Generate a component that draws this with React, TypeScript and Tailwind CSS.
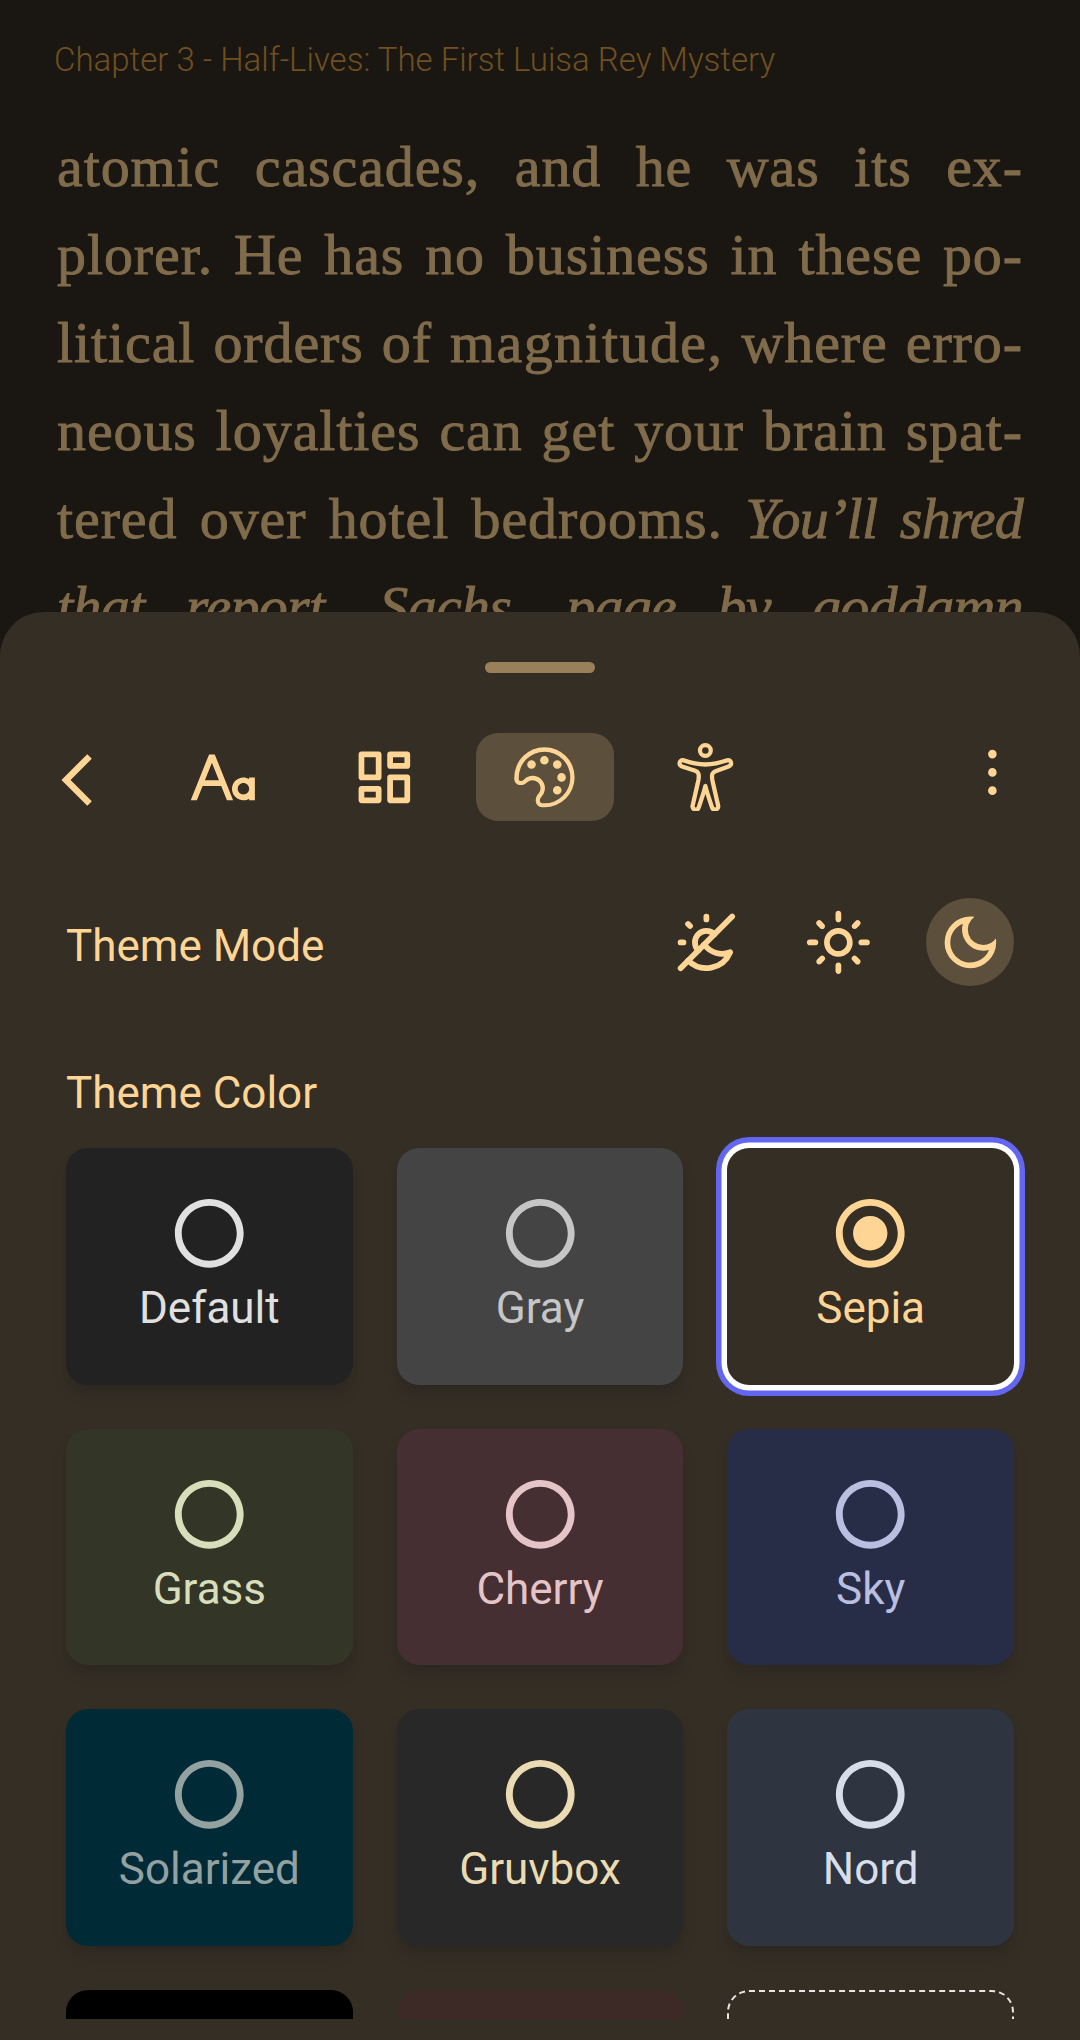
import { MdArrowBackIosNew, MdOutlineDarkMode, MdOutlineLightMode, MdRadioButtonChecked, MdRadioButtonUnchecked } from 'react-icons/md';
import { RiDashboardLine, RiFontSize } from 'react-icons/ri';
import { VscSymbolColor } from 'react-icons/vsc';
import { IoAccessibilityOutline } from 'react-icons/io5';
import { PiDotsThreeVerticalBold } from 'react-icons/pi';
import { TbSunMoon } from 'react-icons/tb';

type Line = { words: string[]; italicFrom: number };

const lines: Line[] = [
  { words: ['atomic', 'cascades,', 'and', 'he', 'was', 'its', 'ex-'], italicFrom: 99 },
  { words: ['plorer.', 'He', 'has', 'no', 'business', 'in', 'these', 'po-'], italicFrom: 99 },
  { words: ['litical', 'orders', 'of', 'magnitude,', 'where', 'erro-'], italicFrom: 99 },
  { words: ['neous', 'loyalties', 'can', 'get', 'your', 'brain', 'spat-'], italicFrom: 99 },
  { words: ['tered', 'over', 'hotel', 'bedrooms.', 'You’ll', 'shred'], italicFrom: 4 },
  { words: ['that', 'report,', 'Sachs,', 'page', 'by', 'goddamn'], italicFrom: 0 },
];

const themes = [
  { name: 'Default', style: 'bg-[#222222] text-[#e0e0e0]' },
  { name: 'Gray', style: 'bg-[#444444] text-[#c6c6c6]' },
  { name: 'Sepia', style: 'bg-[#342e25] text-[#ffd595]', selected: true },
  { name: 'Grass', style: 'bg-[#333627] text-[#d8deba]' },
  { name: 'Cherry', style: 'bg-[#462f32] text-[#e5c4c8]' },
  { name: 'Sky', style: 'bg-[#282d47] text-[#babee1]' },
  { name: 'Solarized', style: 'bg-[#002b36] text-[#93a1a1]' },
  { name: 'Gruvbox', style: 'bg-[#282828] text-[#ebdbb2]' },
  { name: 'Nord', style: 'bg-[#2e3440] text-[#d8dee9]' },
];

const cardShadow = 'shadow-[0_11px_16.5px_-2.75px_rgb(0_0_0/0.1),0_5.5px_11px_-5.5px_rgb(0_0_0/0.1)]';
const selectedRing = 'shadow-[0_0_0_5.5px_#ffffff,0_0_0_11px_#6366f1]';

function BookPage() {
  return (
    <div className="h-[612px] overflow-hidden pt-[39px]">
      <h1 className="ml-[54px] h-[42px] text-[33px] leading-[42px] font-light whitespace-nowrap text-[#704f20]">
        Chapter 3 - Half-Lives: The First Luisa Rey Mystery
      </h1>
      <div className="mt-[42px] mr-[57px] ml-[57px] font-['Liberation_Serif',serif] text-[58px] text-[#806b4b] [-webkit-text-stroke:0.9px_#806b4b]">
        {lines.map((line) => (
          <p key={line.words[0]} className="flex h-[88px] justify-between leading-[88px] whitespace-nowrap">
            {line.words.map((word, i) => (
              <span
                key={word}
                className={i >= line.italicFrom ? 'tracking-[-0.7px] italic' : word === 'magnitude,' ? 'tracking-[1.4px]' : 'tracking-[0.9px]'}
              >
                {word}
              </span>
            ))}
          </p>
        ))}
      </div>
    </div>
  );
}

function Tabs() {
  const tab = 'flex h-[88px] w-[138px] items-center justify-center rounded-[22px]';
  return (
    <div className="flex h-[88px] items-center pl-[46px]">
      <button className="mt-[6px] w-[108px]" aria-label="Back">
        <MdArrowBackIosNew size={61.875} />
      </button>
      <div className="flex gap-[22.9px]">
        <button className={tab} aria-label="Font"><RiFontSize size={68.75} /></button>
        <button className={tab} aria-label="Layout"><RiDashboardLine size={68.75} /></button>
        <button className={`${tab} bg-[#5c4f3b]`} aria-label="Color"><VscSymbolColor size={68.75} /></button>
        <button className={tab} aria-label="Behavior"><IoAccessibilityOutline size={68.75} /></button>
      </div>
      <button className="mr-[53px] mb-[9px] ml-auto" aria-label="More">
        <PiDotsThreeVerticalBold size={68.75} />
      </button>
    </div>
  );
}

function ThemeMode() {
  const mode = 'flex size-[88px] items-center justify-center rounded-full';
  return (
    <div className="mt-[77px] flex h-[88px] items-center justify-between">
      <h2 className="mt-[8px] text-[44px] leading-[66px]">Theme Mode</h2>
      <div className="flex gap-[44px]">
        <button className={mode} aria-label="Auto"><TbSunMoon size={68.75} /></button>
        <button className={mode} aria-label="Light"><MdOutlineLightMode size={68.75} /></button>
        <button className={`${mode} bg-[#5c4f3b]`} aria-label="Dark"><MdOutlineDarkMode size={68.75} /></button>
      </div>
    </div>
  );
}

export default function App() {
  return (
    <main className="h-[2040px] w-[1080px] overflow-hidden bg-[#1a1712] font-[Roboto,sans-serif]">
      <BookPage />
      <section className="h-[1428px] rounded-t-[44px] bg-[#342e25] pt-[50px] text-[#ffd595]">
        <div className="mx-auto mb-[60px] h-[11px] w-[110px] rounded-[5.5px] bg-[#99805b]" />
        <Tabs />
        <div className="px-[66px]">
          <ThemeMode />
          <h2 className="mt-[73.5px] text-[44px] leading-[66px]">Theme Color</h2>
        </div>
        <div className="h-[893px] overflow-hidden px-[66px] pt-[22.5px]">
          <div className="grid grid-cols-3 gap-[44px]">
            {themes.map((theme) => (
              <div
                key={theme.name}
                className={`flex h-[236.5px] flex-col items-center rounded-[22px] pt-[44px] ${theme.style} ${theme.selected ? selectedRing : cardShadow}`}
              >
                {theme.selected ? <MdRadioButtonChecked size={82.5} /> : <MdRadioButtonUnchecked size={82.5} />}
                <span className="pt-[0.5px] text-[44px] leading-[66px]">{theme.name}</span>
              </div>
            ))}
            <div className="h-[236.5px] rounded-[22px] bg-black" />
            <div className="h-[236.5px] rounded-[22px] bg-[#3d2925]" />
            <div className="h-[236.5px] rounded-[22px] border-2 border-dashed border-[#e8e6e3]" />
          </div>
        </div>
      </section>
    </main>
  );
}
